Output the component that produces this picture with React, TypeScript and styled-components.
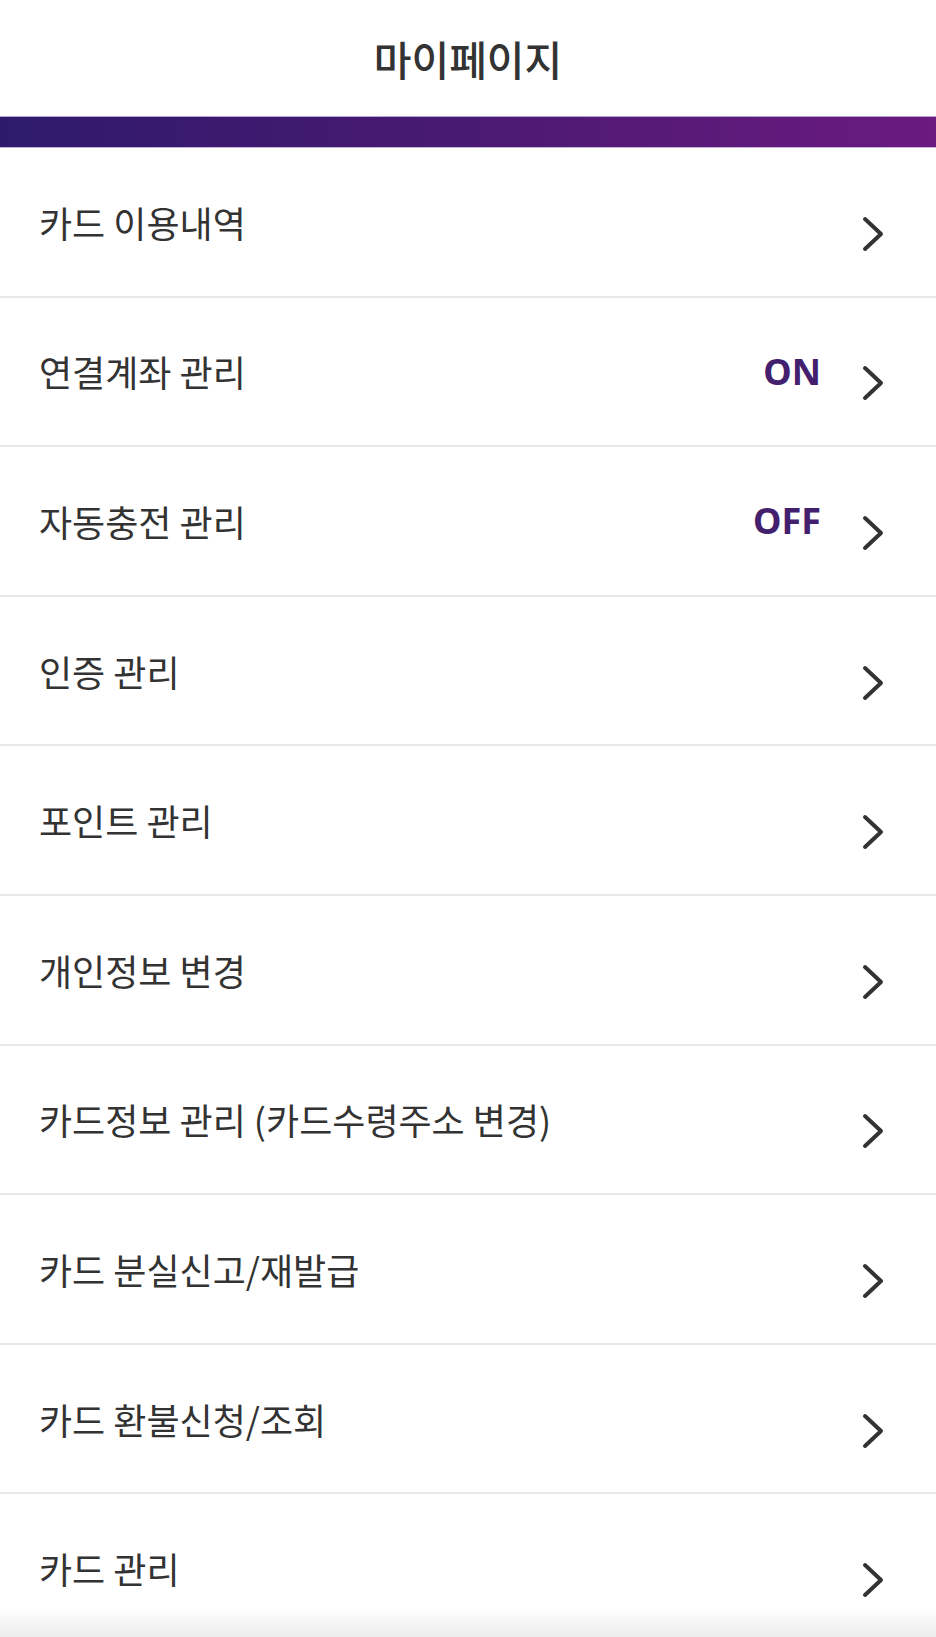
import * as React from 'react';
import styled, { createGlobalStyle } from 'styled-components';

const GlobalStyle = createGlobalStyle`
  html, body {
    margin: 0;
    padding: 0;
    background: #fff;
  }
  body {
    font-family: 'Noto Sans CJK KR', 'Noto Sans', sans-serif;
    color: #333;
    overflow: hidden;
  }
`;

const StyledPage = styled.div`
  flex-direction: column;
  display: flex;
  position: relative;
  width: 100%;
  min-height: 1637px;
`;

const StyledHeader = styled.header`
  justify-content: center;
  align-items: center;
  display: flex;
  height: 116px;
`;

const StyledTitle = styled.h1`
  margin: 0;
  font-size: 41px;
  font-weight: 500;
  color: #333;
`;

const StyledBar = styled.div`
  height: 30px;
  border-top: 1px solid #b6a5cf;
  border-bottom: 1px solid #c5b3d6;
  background: linear-gradient(90deg, #2e1a6b 0%, #4a1a72 50%, #6b1a7f 100%);
`;

const StyledList = styled.ul`
  margin: 0;
  padding: 0;
  list-style: none;
`;

const StyledRow = styled.li`
  align-items: center;
  display: flex;
  box-sizing: border-box;
  height: 149.6px;
  padding: 0 51px 0 39px;
  border-bottom: 2px solid #e8e8e8;
  cursor: pointer;
`;

const StyledLabel = styled.span`
  flex: 1;
  font-size: 36px;
  color: #333;
  white-space: nowrap;
`;

const StyledStatus = styled.span`
  margin-right: 41px;
  font-family: 'Noto Sans', 'Noto Sans CJK KR', sans-serif;
  font-size: 36px;
  font-weight: 700;
  color: #43206e;
`;

const StyledChevron = styled.svg`
  flex-shrink: 0;
  margin-top: 24px;
`;

const StyledBottomShade = styled.div`
  position: fixed;
  left: 0;
  right: 0;
  bottom: 0;
  height: 30px;
  background: linear-gradient(to bottom, rgba(238, 238, 238, 0), #ededed);
  pointer-events: none;
`;

const Chevron = () => (
  <StyledChevron width="23" height="36" viewBox="0 0 23 36">
    <polyline
      points="3,3 19,18 3,33"
      fill="none"
      stroke="#333"
      strokeWidth="4"
      strokeLinecap="round"
      strokeLinejoin="round"
    />
  </StyledChevron>
);

const items: { label: string; status?: string }[] = [
  { label: '카드 이용내역' },
  { label: '연결계좌 관리', status: 'ON' },
  { label: '자동충전 관리', status: 'OFF' },
  { label: '인증 관리' },
  { label: '포인트 관리' },
  { label: '개인정보 변경' },
  { label: '카드정보 관리 (카드수령주소 변경)' },
  { label: '카드 분실신고/재발급' },
  { label: '카드 환불신청/조회' },
  { label: '카드 관리' },
];

export default function App() {
  return (
    <StyledPage>
      <GlobalStyle />
      <StyledHeader>
        <StyledTitle>마이페이지</StyledTitle>
      </StyledHeader>
      <StyledBar />
      <StyledList>
        {items.map((item) => (
          <StyledRow key={item.label}>
            <StyledLabel>{item.label}</StyledLabel>
            {item.status && <StyledStatus>{item.status}</StyledStatus>}
            <Chevron />
          </StyledRow>
        ))}
      </StyledList>
      <StyledBottomShade />
    </StyledPage>
  );
}
